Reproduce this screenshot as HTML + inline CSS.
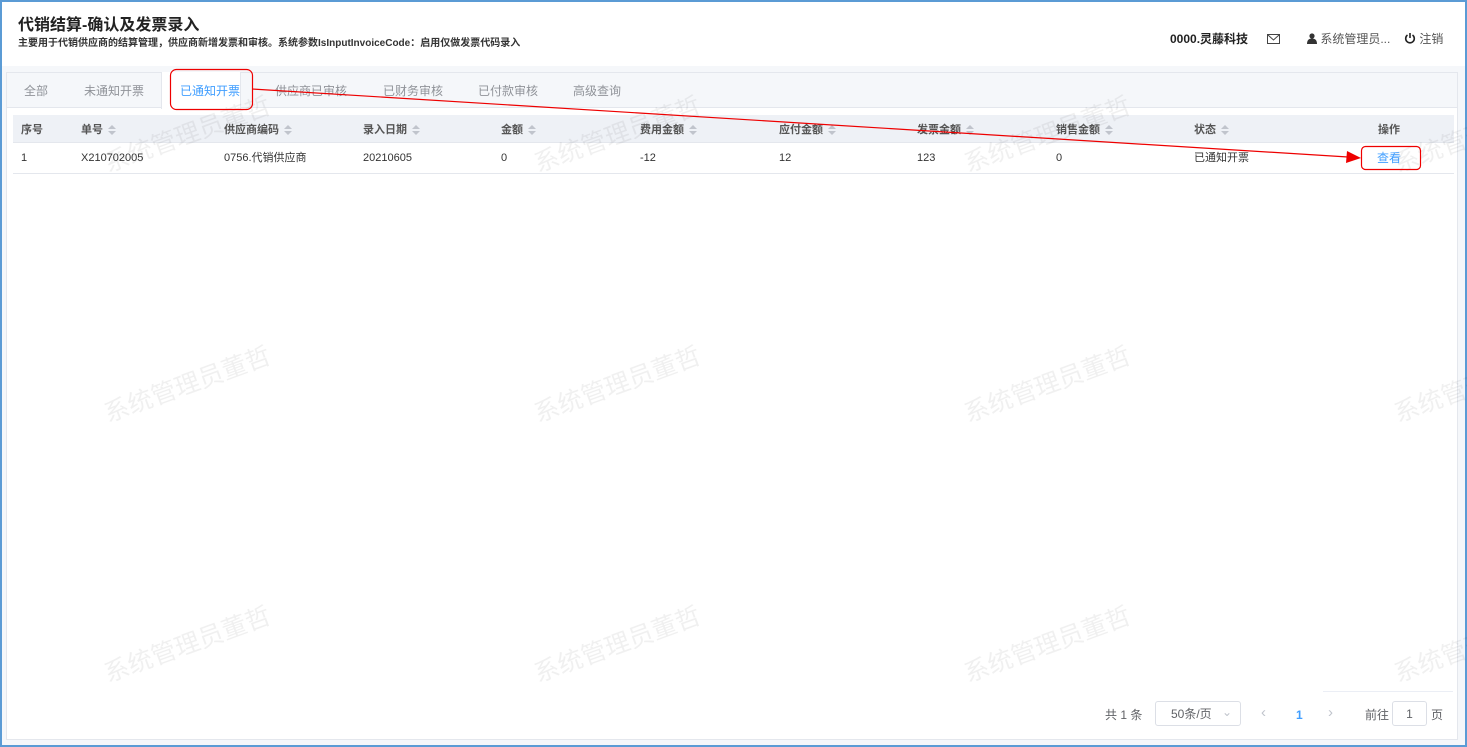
<!DOCTYPE html>
<html><head><meta charset="utf-8"><style>
*{box-sizing:border-box;margin:0;padding:0}
body{width:1467px;height:747px;overflow:hidden;font-family:"Liberation Sans","Noto Sans CJK SC",sans-serif;background:#fff;position:relative}
.frame{position:absolute;left:0;top:0;width:1467px;height:747px;border:2px solid #5b9bd5;background:#f5f7fa}
.head{position:absolute;left:2px;top:2px;width:1463px;height:64px;background:#fff}
.t1{position:absolute;left:16px;top:14px;font-size:16px;font-weight:bold;color:#222;line-height:20px}
.t2{position:absolute;left:16px;top:35px;font-size:10px;font-weight:bold;color:#333;line-height:13px}
.rt{position:absolute;top:30px;font-size:12px;color:#555;line-height:14px}
.panel{position:absolute;left:6px;top:72px;width:1452px;height:668px;background:#fff;border:1px solid #e4e7ed}
.tabs{position:absolute;left:0;top:0;width:1450px;height:35px;background:#f5f7fa;border-bottom:1px solid #e4e7ed}
.tab{position:absolute;top:11px;font-size:12px;color:#909399;line-height:14px}
.tabact{position:absolute;left:154px;top:-1px;width:80px;height:37px;background:#fff;border-left:1px solid #e4e7ed;border-right:1px solid #e4e7ed}
.th{position:absolute;left:6px;top:42px;width:1441px;height:28px;background:#eef1f6;border-bottom:1px solid #e4e7ed}
.tr{position:absolute;left:6px;top:70px;width:1441px;height:31px;border-bottom:1px solid #e4e7ed}
.c{position:absolute;font-size:11px;color:#333;top:8px;white-space:nowrap;line-height:14px}
.th .c{font-weight:bold;color:#555}
.s{display:inline-block;margin-left:5px;vertical-align:middle;width:8px;height:10px;position:relative}
.s:before{content:"";position:absolute;left:0;top:0;border:4px solid transparent;border-bottom:4px solid #c0c4cc;border-top:0}
.s:after{content:"";position:absolute;left:0;top:6px;border:4px solid transparent;border-top:4px solid #c0c4cc;border-bottom:0}
.wm{position:absolute;font-size:25px;color:rgba(0,0,0,0.06);transform:rotate(-20deg);white-space:nowrap;line-height:30px}
.pg{position:absolute;font-size:12px;color:#606266;line-height:14px}
</style></head><body>
<div class="frame"></div>
<div class="head">
<div class="t1">代销结算-确认及发票录入</div>
<div class="t2">主要用于代销供应商的结算管理，供应商新增发票和审核。系统参数IsInputInvoiceCode：启用仅做发票代码录入</div>
<div class="rt" style="left:1168px;color:#222;font-weight:bold">0000.灵藤科技</div>
<div class="rt" style="left:1265px;top:32px"><svg width="13" height="11"><rect x="0.5" y="0.5" width="12" height="9" fill="none" stroke="#444"/><path d="M1 1 L6.5 6 L12 1" fill="none" stroke="#444"/></svg></div>
<div class="rt" style="left:1305px"><svg width="10" height="11" style="vertical-align:-1px"><circle cx="5" cy="3" r="2.6" fill="#333"/><path d="M0 11 Q0 5.5 5 5.5 Q10 5.5 10 11Z" fill="#333"/></svg> 系统管理员...</div>
<div class="rt" style="left:1402px"><svg width="12" height="12" style="vertical-align:-1px"><path d="M3.5 3 A4.3 4.3 0 1 0 8.5 3" fill="none" stroke="#222" stroke-width="1.6"/><path d="M6 1 V6" stroke="#222" stroke-width="1.6"/></svg> 注销</div>
</div>
<div class="panel">
<div class="tabs">
<div class="tabact"></div>
<div class="tab" style="left:17px">全部</div>
<div class="tab" style="left:77px">未通知开票</div>
<div class="tab" style="left:173px;color:#409eff">已通知开票</div>
<div class="tab" style="left:268px">供应商已审核</div>
<div class="tab" style="left:376px">已财务审核</div>
<div class="tab" style="left:471px">已付款审核</div>
<div class="tab" style="left:566px">高级查询</div>
</div>
<div class="th">
<div class="c" style="left:8px">序号</div>
<div class="c" style="left:68px">单号<i class="s"></i></div>
<div class="c" style="left:211px">供应商编码<i class="s"></i></div>
<div class="c" style="left:350px">录入日期<i class="s"></i></div>
<div class="c" style="left:488px">金额<i class="s"></i></div>
<div class="c" style="left:627px">费用金额<i class="s"></i></div>
<div class="c" style="left:766px">应付金额<i class="s"></i></div>
<div class="c" style="left:904px">发票金额<i class="s"></i></div>
<div class="c" style="left:1043px">销售金额<i class="s"></i></div>
<div class="c" style="left:1181px">状态<i class="s"></i></div>
<div class="c" style="left:1365px">操作</div>
</div>
<div class="tr">
<div class="c" style="left:8px">1</div>
<div class="c" style="left:68px">X210702005</div>
<div class="c" style="left:211px">0756.代销供应商</div>
<div class="c" style="left:350px">20210605</div>
<div class="c" style="left:488px">0</div>
<div class="c" style="left:627px">-12</div>
<div class="c" style="left:766px">12</div>
<div class="c" style="left:904px">123</div>
<div class="c" style="left:1043px">0</div>
<div class="c" style="left:1181px">已通知开票</div>
<div class="c" style="left:1364px;color:#409eff;font-size:12px">查看</div>
</div>
<div style="position:absolute;left:1316px;top:618px;width:130px;border-top:1px solid #ebeef5"></div>
<div class="pg" style="left:1098px;top:635px">共 1 条</div>
<div style="position:absolute;left:1148px;top:628px;width:86px;height:25px;border:1px solid #dcdfe6;border-radius:3px;font-size:12px;color:#606266;padding:5px 0 0 15px;line-height:14px">50条/页<span style="position:absolute;right:8px;top:3px;color:#c0c4cc">⌄</span></div>
<div class="pg" style="left:1254px;top:633px;color:#c0c4cc;font-size:15px">‹</div>
<div class="pg" style="left:1289px;top:635px;color:#409eff;font-weight:bold">1</div>
<div class="pg" style="left:1321px;top:633px;color:#c0c4cc;font-size:15px">›</div>
<div class="pg" style="left:1358px;top:635px">前往</div>
<div style="position:absolute;left:1385px;top:628px;width:35px;height:25px;border:1px solid #dcdfe6;border-radius:3px;font-size:12px;text-align:center;padding-top:5px;color:#606266;line-height:14px">1</div>
<div class="pg" style="left:1424px;top:635px">页</div>
</div>
<div class="wm" style="left:100px;top:120px">系统管理员董哲</div>
<div class="wm" style="left:530px;top:120px">系统管理员董哲</div>
<div class="wm" style="left:960px;top:120px">系统管理员董哲</div>
<div class="wm" style="left:1390px;top:120px">系统管理员董哲</div>
<div class="wm" style="left:100px;top:370px">系统管理员董哲</div>
<div class="wm" style="left:530px;top:370px">系统管理员董哲</div>
<div class="wm" style="left:960px;top:370px">系统管理员董哲</div>
<div class="wm" style="left:1390px;top:370px">系统管理员董哲</div>
<div class="wm" style="left:100px;top:630px">系统管理员董哲</div>
<div class="wm" style="left:530px;top:630px">系统管理员董哲</div>
<div class="wm" style="left:960px;top:630px">系统管理员董哲</div>
<div class="wm" style="left:1390px;top:630px">系统管理员董哲</div>
<svg style="position:absolute;left:0;top:0" width="1467" height="747">
<rect x="170.5" y="69.5" width="82" height="40" rx="6" fill="none" stroke="#e00" stroke-width="1.2"/>
<rect x="1361.5" y="146.5" width="59" height="23" rx="4" fill="none" stroke="#e00" stroke-width="1.2"/>
<line x1="252" y1="89" x2="1348" y2="157" stroke="#e00" stroke-width="1.2"/>
<path d="M1361 158 L1347 151 L1346 163Z" fill="#e00"/>
</svg>
</body></html>
